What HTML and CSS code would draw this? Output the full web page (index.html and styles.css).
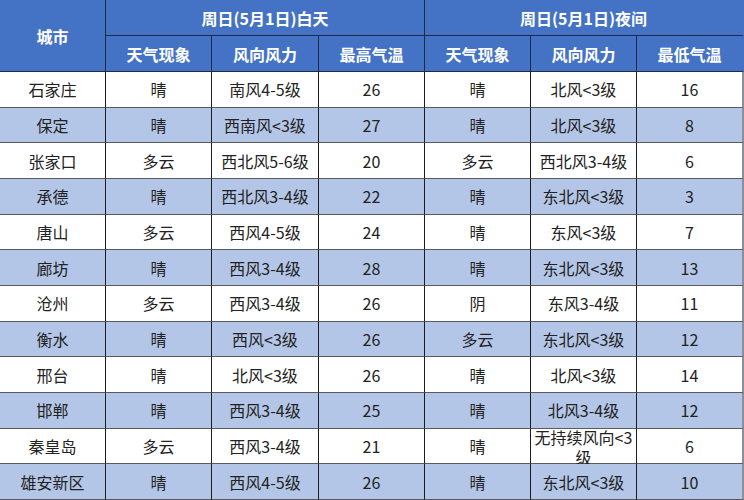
FILE: index.html
```html
<!DOCTYPE html>
<html lang="zh-CN">
<head>
<meta charset="utf-8">
<title>河北天气</title>
<link rel="stylesheet" href="styles.css">
</head>
<body>
<div class="table">
  <div class="cell head city">城市</div>
  <div class="cell head group">周日(5月1日)白天</div>
  <div class="cell head group last">周日(5月1日)夜间</div>
  <div class="cell head">天气现象</div>
  <div class="cell head">风向风力</div>
  <div class="cell head">最高气温</div>
  <div class="cell head">天气现象</div>
  <div class="cell head">风向风力</div>
  <div class="cell head last">最低气温</div>

  <div class="cell">石家庄</div><div class="cell">晴</div><div class="cell">南风4-5级</div><div class="cell">26</div><div class="cell">晴</div><div class="cell">北风&lt;3级</div><div class="cell last">16</div>
  <div class="cell alt">保定</div><div class="cell alt">晴</div><div class="cell alt">西南风&lt;3级</div><div class="cell alt">27</div><div class="cell alt">晴</div><div class="cell alt">北风&lt;3级</div><div class="cell alt last">8</div>
  <div class="cell">张家口</div><div class="cell">多云</div><div class="cell">西北风5-6级</div><div class="cell">20</div><div class="cell">多云</div><div class="cell">西北风3-4级</div><div class="cell last">6</div>
  <div class="cell alt">承德</div><div class="cell alt">晴</div><div class="cell alt">西北风3-4级</div><div class="cell alt">22</div><div class="cell alt">晴</div><div class="cell alt">东北风&lt;3级</div><div class="cell alt last">3</div>
  <div class="cell">唐山</div><div class="cell">多云</div><div class="cell">西风4-5级</div><div class="cell">24</div><div class="cell">晴</div><div class="cell">东风&lt;3级</div><div class="cell last">7</div>
  <div class="cell alt">廊坊</div><div class="cell alt">晴</div><div class="cell alt">西风3-4级</div><div class="cell alt">28</div><div class="cell alt">晴</div><div class="cell alt">东北风&lt;3级</div><div class="cell alt last">13</div>
  <div class="cell">沧州</div><div class="cell">多云</div><div class="cell">西风3-4级</div><div class="cell">26</div><div class="cell">阴</div><div class="cell">东风3-4级</div><div class="cell last">11</div>
  <div class="cell alt">衡水</div><div class="cell alt">晴</div><div class="cell alt">西风&lt;3级</div><div class="cell alt">26</div><div class="cell alt">多云</div><div class="cell alt">东北风&lt;3级</div><div class="cell alt last">12</div>
  <div class="cell">邢台</div><div class="cell">晴</div><div class="cell">北风&lt;3级</div><div class="cell">26</div><div class="cell">晴</div><div class="cell">北风&lt;3级</div><div class="cell last">14</div>
  <div class="cell alt">邯郸</div><div class="cell alt">晴</div><div class="cell alt">西风3-4级</div><div class="cell alt">25</div><div class="cell alt">晴</div><div class="cell alt">北风3-4级</div><div class="cell alt last">12</div>
  <div class="cell">秦皇岛</div><div class="cell">多云</div><div class="cell">西风3-4级</div><div class="cell">21</div><div class="cell">晴</div><div class="cell wrap">无持续风向&lt;3级</div><div class="cell last">6</div>
  <div class="cell alt">雄安新区</div><div class="cell alt">晴</div><div class="cell alt">西风4-5级</div><div class="cell alt">26</div><div class="cell alt">晴</div><div class="cell alt">东北风&lt;3级</div><div class="cell alt last">10</div>
</div>
</body>
</html>
```
FILE: styles.css
```css
html, body {
  margin: 0;
  padding: 0;
  background: #ffffff;
}
body {
  font-family: "Noto Sans CJK SC", "Noto Sans", sans-serif;
  font-size: 16px;
  color: #222222;
}
.table {
  display: grid;
  width: 744px;
  grid-template-columns: 106px 106px 107px 106px 106px 106px 107px;
  grid-template-rows: 36px 36px repeat(12, 35.67px);
  overflow: hidden;
}
.cell {
  box-sizing: border-box;
  display: flex;
  align-items: center;
  justify-content: center;
  text-align: center;
  border-right: 1px solid #1c1c1c;
  border-bottom: 1px solid #5a5a5a;
  background: #ffffff;
  line-height: 18px;
  white-space: nowrap;
}
.cell.last {
  border-right: 2px solid #8a8f99;
}
.cell.alt {
  background: #b4c6e7;
}
.head {
  background: #4472c4;
  color: #ffffff;
  font-weight: bold;
  border-right-color: #1f2a44;
  border-bottom-color: #1f2a44;
}
.head.last {
  border-right: 2px solid #4472c4;
}
.city {
  grid-row: span 2;
}
.group {
  grid-column: span 3;
}
.wrap {
  white-space: normal;
  padding: 2px 1px 0;
  line-height: 20px;
  overflow: visible;
}
```
